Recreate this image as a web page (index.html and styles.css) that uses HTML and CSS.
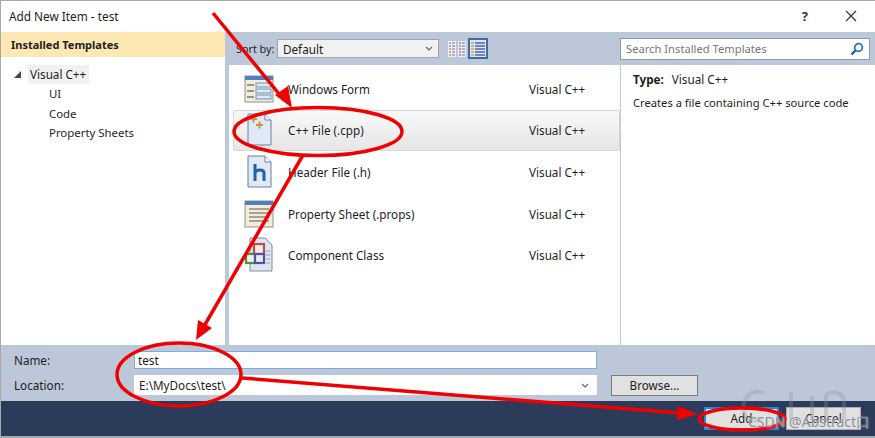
FILE: index.html
```html
<!DOCTYPE html>
<html lang="en">
<head>
    <meta charset="UTF-8">
    <title>Add New Item - test</title>
    <link rel="stylesheet" href="styles.css">
</head>
<body>
    <div class="dialog">
        <div class="title-bar">
            <span class="title">Add New Item - test</span>
            <span class="help">?</span>
            <svg class="close" width="12" height="12" viewBox="0 0 12 12"><path d="M1 1L11 11M11 1L1 11" stroke="#333" stroke-width="1.2" fill="none"/></svg>
        </div>

        <div class="main">
            <div class="tree">
                <div class="tree-header">Installed Templates</div>
                <div class="tree-root">
                    <span class="tree-arrow"></span>
                    <span class="tree-selected">Visual C++</span>
                </div>
                <div class="tree-child">UI</div>
                <div class="tree-child">Code</div>
                <div class="tree-child">Property Sheets</div>
            </div>

            <div class="center">
                <div class="sort-bar">
                    <span class="sort-label">Sort by:</span>
                    <div class="sort-select">
                        <span>Default</span>
                        <svg width="8" height="5" viewBox="0 0 8 5"><path d="M1 1L4 4L7 1" stroke="#666" stroke-width="1.2" fill="none"/></svg>
                    </div>
                    <div class="view-btn">
                        <svg width="18" height="16" viewBox="0 0 18 16">
                            <rect x="0" y="0" width="8" height="16" fill="#e9eef6"/>
                            <rect x="10" y="0" width="8" height="16" fill="#e9eef6"/>
                            <path d="M1 2h2M1 5h2M1 8h2M1 11h2M1 14h2" stroke="#d9924a" stroke-width="1.4"/>
                            <path d="M4 2h3M4 5h3M4 8h3M4 11h3M4 14h3" stroke="#8e9ccc" stroke-width="1.4"/>
                            <path d="M11 2h2M11 5h2M11 8h2M11 11h2M11 14h2" stroke="#d6705a" stroke-width="1.4"/>
                            <path d="M14 2h3M14 5h3M14 8h3M14 11h3M14 14h3" stroke="#8e9ccc" stroke-width="1.4"/>
                        </svg>
                    </div>
                    <div class="view-btn view-btn-active">
                        <svg width="16" height="15" viewBox="0 0 16 15">
                            <path d="M1 2h3M1 5h3M1 8h3M1 11h3M1 14h3" stroke="#d9a24a" stroke-width="1.4"/>
                            <path d="M5 2h10M5 5h10M5 8h10M5 11h10M5 14h10" stroke="#5a5fb0" stroke-width="1.4"/>
                        </svg>
                    </div>
                </div>

                <div class="list">
                    <div class="item">
                        <svg class="item-icon" width="30" height="30" viewBox="0 0 30 30">
                            <rect x="1" y="2" width="28" height="26" fill="#f3ecd6" stroke="#8a9099"/>
                            <rect x="1" y="2" width="28" height="4" fill="#4f7fc0"/>
                            <path d="M3 11h7M3 17h7M3 23h7" stroke="#777" stroke-width="1.5"/>
                            <rect x="12" y="9" width="15" height="4" fill="#dce9f7" stroke="#6f93bd"/>
                            <rect x="12" y="15" width="15" height="4" fill="#dce9f7" stroke="#6f93bd"/>
                            <rect x="12" y="21" width="15" height="4" fill="#dce9f7" stroke="#6f93bd"/>
                        </svg>
                        <span class="item-name">Windows Form</span>
                        <span class="item-type">Visual C++</span>
                    </div>
                    <div class="item item-selected">
                        <svg class="item-icon" width="30" height="34" viewBox="0 0 30 34">
                            <path d="M4 1H21L27 7V32H4Z" fill="#dfe9f7" stroke="#6a7f9c"/>
                            <path d="M21 1V7H27" fill="#fff" stroke="#6a7f9c"/>
                            <path d="M6 6h7M9.500 2.500v7M12 12h7M15.500 8.500v7" stroke="#c9983c" stroke-width="2"/>
                        </svg>
                        <span class="item-name">C++ File (.cpp)</span>
                        <span class="item-type">Visual C++</span>
                    </div>
                    <div class="item">
                        <svg class="item-icon" width="30" height="34" viewBox="0 0 30 34">
                            <path d="M4 1H21L27 7V32H4Z" fill="#dfe9f7" stroke="#6a7f9c"/>
                            <path d="M21 1V7H27" fill="#fff" stroke="#6a7f9c"/>
                            <path d="M11 9V26M11 18C12 14 20 14 20 18V26" stroke="#1f62ad" stroke-width="3" fill="none"/>
                        </svg>
                        <span class="item-name">Header File (.h)</span>
                        <span class="item-type">Visual C++</span>
                    </div>
                    <div class="item">
                        <svg class="item-icon" width="30" height="30" viewBox="0 0 30 30">
                            <rect x="1" y="2" width="28" height="26" fill="#f3ecd6" stroke="#8a9099"/>
                            <rect x="1" y="2" width="28" height="4" fill="#4f7fc0"/>
                            <path d="M5 10h20M5 14h20M5 18h20M5 22h20" stroke="#8a8a80" stroke-width="1.300"/>
                        </svg>
                        <span class="item-name">Property Sheet (.props)</span>
                        <span class="item-type">Visual C++</span>
                    </div>
                    <div class="item">
                        <svg class="item-icon" width="30" height="36" viewBox="0 0 30 36">
                            <path d="M6 1H21L28 8V34H6Z" fill="#dfe6f2" stroke="#7d8ba0"/>
                            <path d="M22 14h4M22 18h4M22 22h4M22 26h4" stroke="#8fa0b8"/>
                            <rect x="10" y="7" width="10" height="10" fill="#f6e9e6" stroke="#b9504a" stroke-width="2.200"/>
                            <rect x="2" y="17" width="9" height="9" fill="#eef6ea" stroke="#4d8f45" stroke-width="2.200"/>
                            <rect x="11" y="17" width="9" height="9" fill="#e9e8f4" stroke="#55509c" stroke-width="2.200"/>
                        </svg>
                        <span class="item-name">Component Class</span>
                        <span class="item-type">Visual C++</span>
                    </div>
                </div>
            </div>

            <div class="side">
                <div class="search-bar">
                    <div class="search-box">
                        <span>Search Installed Templates</span>
                        <svg width="14" height="14" viewBox="0 0 14 14"><circle cx="8.500" cy="5.500" r="3.800" stroke="#2a73c4" stroke-width="1.800" fill="none"/><path d="M5.500 8.500L1.500 12.500" stroke="#1f5fa8" stroke-width="2.400"/></svg>
                    </div>
                </div>
                <div class="details">
                    <div class="detail-type"><b>Type:</b><span>Visual C++</span></div>
                    <div class="detail-text">Creates a file containing C++ source code</div>
                </div>
            </div>
        </div>

        <div class="form">
            <div class="form-row">
                <label class="form-label">Name:</label>
                <div class="input input-focus">test</div>
            </div>
            <div class="form-row">
                <label class="form-label">Location:</label>
                <div class="input input-combo">
                    <span>E:\MyDocs\test\</span>
                    <svg width="8" height="5" viewBox="0 0 8 5"><path d="M1 1L4 4L7 1" stroke="#666" stroke-width="1.2" fill="none"/></svg>
                </div>
                <div class="browse">Browse...</div>
            </div>
        </div>

        <div class="footer">
            <div class="btn btn-default">Add</div>
            <div class="btn">Cancel</div>
        </div>
    </div>

    <!-- red annotations drawn on top of the screenshot -->
    <svg class="marks" width="875" height="438" viewBox="0 0 875 438">
        <g fill="none" stroke="#8d929c" stroke-width="4" opacity="0.3">
            <path d="M764 393C750 388 741 400 744 412C746 420 754 422 762 420"/>
            <path d="M791 392V420M812 396V420"/>
            <path d="M826 394C836 390 844 394 844 402V420M826 394V420"/>
        </g>
        <g fill="none" stroke="#f00000" stroke-width="3.500">
            <ellipse cx="318" cy="131.500" rx="84" ry="24"/>
            <ellipse cx="179" cy="374.500" rx="62" ry="31.500"/>
            <ellipse cx="742" cy="419" rx="43" ry="11"/>
        </g>
        <g stroke="#f00000" stroke-width="3.500" fill="none">
            <path d="M213 13L284 100"/>
            <path d="M303 155L203 328"/>
            <path d="M242 378L680 413"/>
        </g>
        <g fill="#f00000">
            <path d="M292 108L275 95L288 86Z"/>
            <path d="M196 340L198 320L212 328Z"/>
            <path d="M698 414L678 406L677 420Z"/>
        </g>
    </svg>
    <div class="watermark">CSDN @Abstract口</div>
</body>
</html>
```

FILE: styles.css
```css
html, body {
    margin: 0;
    height: 100%;
    overflow: hidden;
}
body {
    font-family: "Noto Sans", Arial, sans-serif;
    font-size: 11.7px;
    color: #1e1e1e;
    position: relative;
}
.dialog {
    width: 875px;
    height: 438px;
    box-sizing: border-box;
    border-top: 1px solid #a9a9a9;
    border-left: 1px solid #a9a9a9;
    border-bottom: 2px solid #a9a9a9;
    display: flex;
    flex-direction: column;
    background-color: #fff;
}
.title-bar {
    height: 31px;
    display: flex;
    align-items: center;
    padding-left: 8px;
    padding-bottom: 2px;
    box-sizing: border-box;
    background-color: #fff;
}
.title {
    flex: 1;
    font-size: 11.8px;
}
.help {
    font-size: 13px;
    font-weight: bold;
    color: #333;
    margin-right: 37px;
}
.close {
    margin-right: 18px;
}
.main {
    height: 313px;
    display: flex;
    background-color: #bcc8da;
}
.tree {
    width: 224px;
    background-color: #fff;
}
.tree-header {
    height: 25px;
    line-height: 25px;
    padding-left: 10px;
    font-weight: bold;
    font-size: 11px;
    background-color: #fde8b4;
}
.tree-root {
    display: flex;
    align-items: center;
    height: 20px;
    margin-top: 7px;
    padding-left: 13px;
}
.tree-arrow {
    width: 0;
    height: 0;
    border-left: 7px solid transparent;
    border-bottom: 7px solid #444;
    margin-right: 7px;
}
.tree-selected {
    padding: 0 3px 0 2px;
    line-height: 19px;
    background-color: #f1f1f1;
}
.tree-child {
    height: 19.5px;
    line-height: 19px;
    padding-left: 48px;
    font-size: 11.4px;
}
.center {
    width: 395px;
    padding-left: 4px;
    box-sizing: border-box;
    display: flex;
    flex-direction: column;
}
.sort-bar {
    height: 33px;
    display: flex;
    align-items: center;
    flex-shrink: 0;
}
.sort-label {
    width: 48px;
    padding-left: 7px;
    box-sizing: border-box;
    font-size: 10.8px;
    white-space: nowrap;
}
.sort-select {
    width: 162px;
    height: 19px;
    box-sizing: border-box;
    border: 1px solid #a3a3a3;
    background-color: #f1f1f1;
    display: flex;
    align-items: center;
    justify-content: space-between;
    padding: 0 5px;
    margin-right: 8px;
}
.view-btn {
    width: 20px;
    height: 21px;
    display: flex;
    align-items: center;
    justify-content: center;
    margin-right: 1px;
}
.view-btn-active {
    background-color: #dbe5f4;
    box-sizing: border-box;
    border: 2px solid #3d6ea3;
}
.list {
    flex: 1;
    background-color: #fff;
    padding-top: 3px;
}
.item {
    height: 41.6px;
    box-sizing: border-box;
    display: flex;
    align-items: center;
    padding-left: 15px;
}
.item-icon {
    flex-shrink: 0;
    margin-right: 14px;
}
.item-name {
    width: 241px;
}
.item-type {
    flex: 1;
}
.item-selected {
    margin-left: 4px;
    padding-left: 10px;
    border: 1px solid #d6d6d6;
    border-radius: 2px;
    background: linear-gradient(#f8f8f8, #e6e6e6);
}
.side {
    flex: 1;
    display: flex;
    flex-direction: column;
}
.search-bar {
    height: 33px;
    flex-shrink: 0;
    display: flex;
    align-items: center;
}
.search-box {
    width: 250px;
    height: 22px;
    box-sizing: border-box;
    background-color: #fff;
    border: 1px solid #8d9bb0;
    display: flex;
    align-items: center;
    justify-content: space-between;
    padding: 0 5px;
    color: #777;
    font-size: 11.2px;
}
.details {
    flex: 1;
    margin-left: 1px;
    background-color: #fff;
    padding: 6px 12px;
}
.detail-type {
    display: flex;
    gap: 8px;
    margin-bottom: 8px;
}
.detail-text {
    font-size: 11.2px;
    white-space: nowrap;
}
.form {
    height: 56px;
    box-sizing: border-box;
    background-color: #bcc7d9;
    padding: 5px 0 0 13px;
}
.form-row {
    display: flex;
    align-items: center;
    height: 20px;
    margin-bottom: 5px;
}
.form-label {
    width: 120px;
}
.input {
    width: 463px;
    height: 18px;
    box-sizing: border-box;
    background-color: #fff;
    line-height: 16px;
    padding-left: 3px;
}
.input-focus {
    border: 1px solid #79aee6;
}
.input-combo {
    height: 20px;
    line-height: 20px;
    padding: 0 8px 0 5px;
    display: flex;
    align-items: center;
    justify-content: space-between;
}
.browse {
    width: 87px;
    height: 21px;
    box-sizing: border-box;
    margin-left: 14px;
    background-color: #e1e1e1;
    border: 1px solid #7a7a7a;
    text-align: center;
    line-height: 19px;
}
.footer {
    flex: 1;
    background-color: #2c3b5a;
    display: flex;
    justify-content: flex-end;
    align-items: center;
    gap: 7px;
    padding-right: 14px;
}
.btn {
    width: 75px;
    height: 23px;
    box-sizing: border-box;
    background-color: #e1e1e1;
    border: 1px solid #adadad;
    text-align: center;
    line-height: 21px;
}
.btn-default {
    border: 2px solid #1f8be0;
    line-height: 19px;
}
.marks {
    position: absolute;
    top: 0;
    left: 0;
}
.watermark {
    position: absolute;
    left: 748px;
    top: 412px;
    font-size: 14px;
    color: #8b8f98;
    text-shadow: 0 0 2px #e8e8e8;
    white-space: nowrap;
}
```
